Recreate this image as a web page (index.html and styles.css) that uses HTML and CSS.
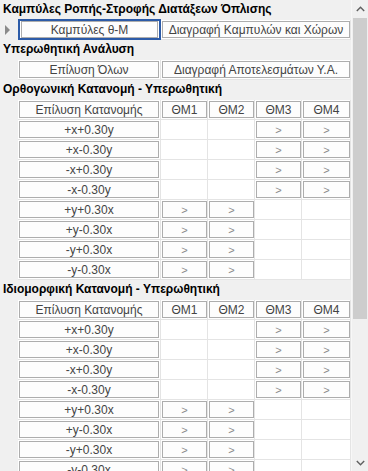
FILE: index.html
```html
<!DOCTYPE html>
<html lang="el">
<head>
<meta charset="utf-8">
<link rel="stylesheet" href="styles.css">
</head>
<body>
<div class="app">
  <div class="content">
    <div class="section first">Καμπύλες Ροπής-Στροφής Διατάξεων Όπλισης</div>
    <div class="grid two">
      <div class="rh"><span class="arrow"></span></div>
      <div class="cell c1 sel"><span class="btn">Καμπύλες θ-Μ</span></div>
      <div class="cell cw"><span class="btn">Διαγραφή Καμπυλών και Χώρων</span></div>
    </div>
    <div class="section">Υπερωθητική Ανάλυση</div>
    <div class="grid two">
      <div class="rh"></div>
      <div class="cell c1"><span class="btn">Επίλυση Όλων</span></div>
      <div class="cell cw"><span class="btn">Διαγραφή Αποτελεσμάτων Υ.Α.</span></div>
    </div>

    <div class="section">Ορθογωνική Κατανομή - Υπερωθητική</div>
    <div class="grid six">
      <div class="rh"></div><div class="cell c1"><span class="btn">Επίλυση Κατανομής</span></div><div class="cell"><span class="btn">ΘΜ1</span></div><div class="cell"><span class="btn">ΘΜ2</span></div><div class="cell"><span class="btn">ΘΜ3</span></div><div class="cell last"><span class="btn">ΘΜ4</span></div>
      <div class="rh"></div><div class="cell c1"><span class="btn">+x+0.30y</span></div><div class="cell"></div><div class="cell"></div><div class="cell"><span class="btn gt">&gt;</span></div><div class="cell last"><span class="btn gt">&gt;</span></div>
      <div class="rh"></div><div class="cell c1"><span class="btn">+x-0.30y</span></div><div class="cell"></div><div class="cell"></div><div class="cell"><span class="btn gt">&gt;</span></div><div class="cell last"><span class="btn gt">&gt;</span></div>
      <div class="rh"></div><div class="cell c1"><span class="btn">-x+0.30y</span></div><div class="cell"></div><div class="cell"></div><div class="cell"><span class="btn gt">&gt;</span></div><div class="cell last"><span class="btn gt">&gt;</span></div>
      <div class="rh"></div><div class="cell c1"><span class="btn">-x-0.30y</span></div><div class="cell"></div><div class="cell"></div><div class="cell"><span class="btn gt">&gt;</span></div><div class="cell last"><span class="btn gt">&gt;</span></div>
      <div class="rh"></div><div class="cell c1"><span class="btn">+y+0.30x</span></div><div class="cell"><span class="btn gt">&gt;</span></div><div class="cell"><span class="btn gt">&gt;</span></div><div class="cell"></div><div class="cell last"></div>
      <div class="rh"></div><div class="cell c1"><span class="btn">+y-0.30x</span></div><div class="cell"><span class="btn gt">&gt;</span></div><div class="cell"><span class="btn gt">&gt;</span></div><div class="cell"></div><div class="cell last"></div>
      <div class="rh"></div><div class="cell c1"><span class="btn">-y+0.30x</span></div><div class="cell"><span class="btn gt">&gt;</span></div><div class="cell"><span class="btn gt">&gt;</span></div><div class="cell"></div><div class="cell last"></div>
      <div class="rh"></div><div class="cell c1"><span class="btn">-y-0.30x</span></div><div class="cell"><span class="btn gt">&gt;</span></div><div class="cell"><span class="btn gt">&gt;</span></div><div class="cell"></div><div class="cell last"></div>
    </div>

    <div class="section">Ιδιομορφική Κατανομή - Υπερωθητική</div>
    <div class="grid six">
      <div class="rh"></div><div class="cell c1"><span class="btn">Επίλυση Κατανομής</span></div><div class="cell"><span class="btn">ΘΜ1</span></div><div class="cell"><span class="btn">ΘΜ2</span></div><div class="cell"><span class="btn">ΘΜ3</span></div><div class="cell last"><span class="btn">ΘΜ4</span></div>
      <div class="rh"></div><div class="cell c1"><span class="btn">+x+0.30y</span></div><div class="cell"></div><div class="cell"></div><div class="cell"><span class="btn gt">&gt;</span></div><div class="cell last"><span class="btn gt">&gt;</span></div>
      <div class="rh"></div><div class="cell c1"><span class="btn">+x-0.30y</span></div><div class="cell"></div><div class="cell"></div><div class="cell"><span class="btn gt">&gt;</span></div><div class="cell last"><span class="btn gt">&gt;</span></div>
      <div class="rh"></div><div class="cell c1"><span class="btn">-x+0.30y</span></div><div class="cell"></div><div class="cell"></div><div class="cell"><span class="btn gt">&gt;</span></div><div class="cell last"><span class="btn gt">&gt;</span></div>
      <div class="rh"></div><div class="cell c1"><span class="btn">-x-0.30y</span></div><div class="cell"></div><div class="cell"></div><div class="cell"><span class="btn gt">&gt;</span></div><div class="cell last"><span class="btn gt">&gt;</span></div>
      <div class="rh"></div><div class="cell c1"><span class="btn">+y+0.30x</span></div><div class="cell"><span class="btn gt">&gt;</span></div><div class="cell"><span class="btn gt">&gt;</span></div><div class="cell"></div><div class="cell last"></div>
      <div class="rh"></div><div class="cell c1"><span class="btn">+y-0.30x</span></div><div class="cell"><span class="btn gt">&gt;</span></div><div class="cell"><span class="btn gt">&gt;</span></div><div class="cell"></div><div class="cell last"></div>
      <div class="rh"></div><div class="cell c1"><span class="btn">-y+0.30x</span></div><div class="cell"><span class="btn gt">&gt;</span></div><div class="cell"><span class="btn gt">&gt;</span></div><div class="cell"></div><div class="cell last"></div>
      <div class="rh"></div><div class="cell c1"><span class="btn">-y-0.30x</span></div><div class="cell"><span class="btn gt">&gt;</span></div><div class="cell"><span class="btn gt">&gt;</span></div><div class="cell"></div><div class="cell last"></div>
    </div>
  </div>
  <div class="scrollbar">
    <div class="sb-arrow">
      <svg width="9" height="6" viewBox="0 0 9 6"><polyline points="0.8,5 4.5,1.2 8.2,5" fill="none" stroke="#606060" stroke-width="1.4"/></svg>
    </div>
    <div class="sb-track"><div class="sb-thumb"></div></div>
    <div class="sb-arrow">
      <svg width="9" height="6" viewBox="0 0 9 6"><polyline points="0.8,1 4.5,4.8 8.2,1" fill="none" stroke="#606060" stroke-width="1.4"/></svg>
    </div>
  </div>
</div>
</body>
</html>
```
FILE: styles.css
```css
* { box-sizing: border-box; }
html, body {
  margin: 0;
  padding: 0;
  width: 368px;
  height: 471px;
  overflow: hidden;
  background: #f0f0f0;
}
.app {
  display: flex;
  width: 368px;
  height: 471px;
  overflow: hidden;
}
.content {
  width: 351px;
  flex: none;
  overflow: hidden;
  font-family: "Liberation Sans", Arial, sans-serif;
}
.section {
  height: 20px;
  line-height: 18px;
  padding-left: 3px;
  font-weight: bold;
  font-size: 12px;
  color: #000;
  white-space: nowrap;
}
.grid {
  display: grid;
}
.grid.two { grid-template-columns: 18px 143px 190px; }
.grid.six { grid-template-columns: 18px 143px 47px 47px 47px 49px; }
.rh {
  height: 20px;
  background: #f0f0f0;
  display: flex;
  align-items: center;
  padding-left: 5px;
}
.arrow {
  width: 0;
  height: 0;
  border-left: 5px solid #8a8a8a;
  border-top: 5px solid transparent;
  border-bottom: 5px solid transparent;
}
.cell {
  height: 20px;
  background: #fff;
  border-right: 1px solid #e4e4e4;
  border-bottom: 1px solid #e4e4e4;
  padding: 1px 0 1px 1px;
  position: relative;
}
.cell.c1 { padding-right: 1px; }
.cell.last, .cell.cw { padding-right: 0; }
.btn {
  display: flex;
  align-items: center;
  justify-content: center;
  height: 17px;
  border: 1px solid #adadad;
  background: #fdfdfd;
  color: #444;
  font-size: 12px;
  white-space: nowrap;
  overflow: hidden;
}
.btn.gt { color: #8a8a8a; font-size: 11px; }
.cell.sel { padding: 0; }
.cell.sel::after {
  content: "";
  position: absolute;
  left: 0;
  top: -1px;
  right: -1px;
  bottom: -1px;
  border: 2px solid #2c5ba8;
  pointer-events: none;
}
.cell.sel .btn { margin: 1px 2px 0 3px; }
.scrollbar {
  width: 17px;
  flex: none;
  display: flex;
  flex-direction: column;
  background: #f0f0f0;
  border-left: 1px solid #f7f7f7;
}
.sb-arrow {
  height: 17px;
  flex: none;
  display: flex;
  align-items: center;
  justify-content: center;
}
.sb-track {
  flex: 1;
  padding: 1px 1px 0 1px;
}
.sb-thumb {
  height: 301px;
  background: #cdcdcd;
}
```
